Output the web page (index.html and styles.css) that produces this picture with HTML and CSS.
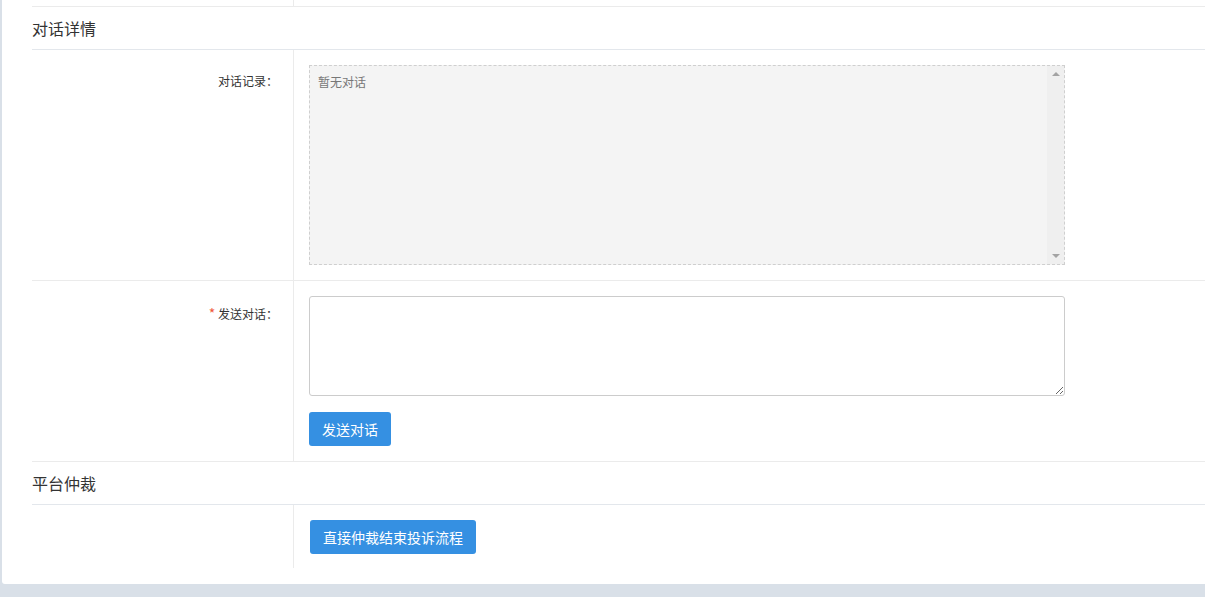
FILE: index.html
```html
<!DOCTYPE html>
<html lang="zh-CN">
<head>
    <meta charset="UTF-8">
    <meta name="viewport" content="width=device-width, initial-scale=1.0">
    <title>投诉详情</title>
    <link rel="stylesheet" href="styles.css">
</head>
<body>

    <div class="panel">

        <!-- tail of the previous section -->
        <div class="form-row row-tail">
            <div class="form-label"></div>
            <div class="form-field"></div>
        </div>

        <h3 class="section-title">对话详情</h3>

        <div class="form-row">
            <div class="form-label">对话记录：</div>
            <div class="form-field">
                <div class="chat-log">
                    <div class="chat-body">暂无对话</div>
                    <div class="chat-scroll">
                        <span class="arrow-up"></span>
                        <span class="arrow-down"></span>
                    </div>
                </div>
            </div>
        </div>

        <div class="form-row">
            <div class="form-label label-send"><span class="required">*</span> 发送对话：</div>
            <div class="form-field">
                <textarea class="chat-input"></textarea>
                <button class="button">发送对话</button>
            </div>
        </div>

        <h3 class="section-title">平台仲裁</h3>

        <div class="form-row row-last">
            <div class="form-label"></div>
            <div class="form-field">
                <button class="button button-wide">直接仲裁结束投诉流程</button>
            </div>
        </div>

    </div>

</body>
</html>
```

FILE: styles.css
```css
* {
    margin: 0;
    padding: 0;
    box-sizing: border-box;
}

body {
    font-family: "Noto Sans CJK SC", "Liberation Sans", sans-serif;
    background-color: #d9e0e8;
    color: #333;
    overflow: hidden;
}

.panel {
    margin-left: 2px;
    padding: 0 0 16px 30px;
    background-color: #fff;
    border-bottom-left-radius: 3px;
}

.section-title {
    height: 43px;
    line-height: 42px;
    font-size: 16px;
    font-weight: normal;
    color: #333;
    border-bottom: 1px solid #e3e7ec;
}

.form-row {
    display: flex;
    border-bottom: 1px solid #ebebeb;
}

.row-tail {
    height: 7px;
}

.row-tail .form-label,
.row-tail .form-field {
    padding: 0;
}

.row-last {
    border-bottom: none;
}

.form-label {
    width: 262px;
    flex-shrink: 0;
    padding: 23px 15px 0 0;
    text-align: right;
    font-size: 12px;
    line-height: 16px;
    border-right: 1px solid #ebebeb;
}

.label-send {
    padding-top: 24px;
}

.required {
    color: #f0593b;
    font-size: 14px;
}

.form-field {
    flex: 1;
    padding: 15px 0 15px 15px;
}

.row-last .form-field {
    padding: 15px 0 14px 16px;
}

.chat-log {
    display: flex;
    width: 756px;
    height: 200px;
    background-color: #f4f4f4;
    border: 1px dashed #cfcfcf;
}

.chat-body {
    flex: 1;
    padding: 8px 8px;
    font-size: 12px;
    line-height: 16px;
    color: #777;
}

.chat-scroll {
    width: 17px;
    display: flex;
    flex-direction: column;
    justify-content: space-between;
    align-items: center;
    padding: 6px 0;
    background-color: #efefef;
}

.arrow-up,
.arrow-down {
    width: 0;
    height: 0;
    border-left: 4px solid transparent;
    border-right: 4px solid transparent;
}

.arrow-up {
    border-bottom: 4px solid #a3a3a3;
}

.arrow-down {
    border-top: 4px solid #a3a3a3;
}

.chat-input {
    display: block;
    width: 756px;
    height: 100px;
    border: 1px solid #cccccc;
    border-radius: 3px;
    font-family: inherit;
    font-size: 12px;
    padding: 6px 8px;
    outline: none;
    resize: vertical;
}

.button {
    display: block;
    margin-top: 16px;
    height: 34px;
    padding: 0 13px;
    background-color: #3590e2;
    border: none;
    border-radius: 3px;
    color: #fff;
    font-family: inherit;
    font-size: 14px;
    cursor: pointer;
}

.button-wide {
    margin-top: 0;
}
```
